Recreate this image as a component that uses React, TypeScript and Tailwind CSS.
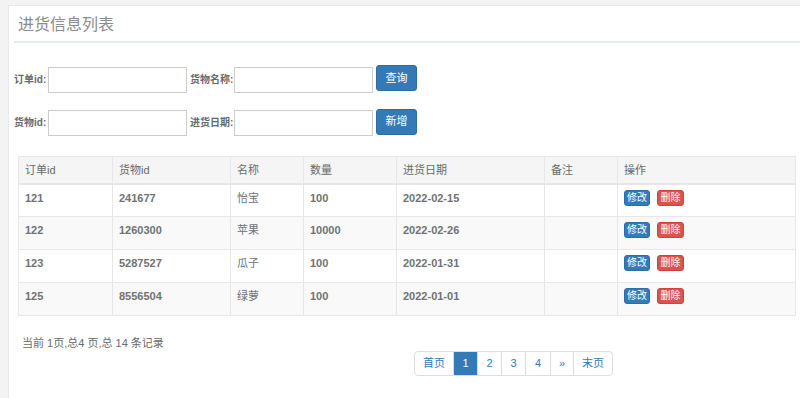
import React from "react";

const rows = [
  ["121", "241677", "怡宝", "100", "2022-02-15"],
  ["122", "1260300", "苹果", "10000", "2022-02-26"],
  ["123", "5287527", "瓜子", "100", "2022-01-31"],
  ["125", "8556504", "绿萝", "100", "2022-01-01"],
];

const widths = [94, 118, 73, 93, 148, 73, 178];
const heads = ["订单id", "货物id", "名称", "数量", "进货日期", "备注", "操作"];

function Label({ w, children }: { w: number; children: React.ReactNode }) {
  return (
    <span style={{ width: w }} className="shrink-0 whitespace-nowrap">
      {children}
    </span>
  );
}

export default function App() {
  return (
    <div
      className="w-[800px] h-[398px] overflow-hidden bg-[#f3f3f4] pl-[8px] pt-[5px] text-[#676a6c]"
      style={{ fontFamily: '"Liberation Sans", "Noto Sans CJK SC", sans-serif' }}
    >
      <div className="h-[400px] w-[800px] bg-white border-l border-t border-[#e7eaec]">
        <div className="ml-[5px] mr-[7px] h-[37px] border-b-2 border-[#e7eaec] pl-[4px] pt-[9px] text-[16px] leading-[20px] text-[#8a8c8e]">
          进货信息列表
        </div>
        <div className="ml-[5px] pt-[23px] text-[10px] font-bold">
          <div className="flex items-center h-[27px]">
            <Label w={34}>订单id:</Label>
            <input className="w-[139px] h-[26px] shrink-0 border border-[#ccc] bg-white" />
            <span className="w-[3px] shrink-0" />
            <Label w={44}>货物名称:</Label>
            <input className="w-[139px] h-[26px] shrink-0 border border-[#ccc] bg-white" />
            <button className="ml-[3px] -mt-[3px] w-[41px] h-[26px] shrink-0 rounded-[3px] bg-[#337ab7] border border-[#2e6da4] text-white font-normal text-[11px]">
              查询
            </button>
          </div>
          <div className="flex items-center h-[27px] mt-[16px]">
            <Label w={34}>货物id:</Label>
            <input className="w-[139px] h-[26px] shrink-0 border border-[#ccc] bg-white" />
            <span className="w-[3px] shrink-0" />
            <Label w={44}>进货日期:</Label>
            <input className="w-[139px] h-[26px] shrink-0 border border-[#ccc] bg-white" />
            <button className="ml-[3px] -mt-[2px] w-[41px] h-[26px] shrink-0 rounded-[3px] bg-[#337ab7] border border-[#2e6da4] text-white font-normal text-[11px]">
              新增
            </button>
          </div>
        </div>
        <table className="ml-[9px] mt-[20px] border-collapse text-[11px] table-fixed" style={{ width: 777 }}>
          <colgroup>
            {widths.map((w, i) => (
              <col key={i} style={{ width: w }} />
            ))}
          </colgroup>
          <thead>
            <tr className="h-[27px] bg-[#f5f5f6]">
              {heads.map((h) => (
                <th key={h} className="border border-[#e7e7e7] border-b-2 text-left font-normal pl-[6px] text-[11px]">
                  {h}
                </th>
              ))}
            </tr>
          </thead>
          <tbody>
            {rows.map((r, i) => (
              <tr key={i} className={`h-[33px] ${i % 2 === 1 ? "bg-[#f9f9f9]" : "bg-white"}`}>
                {r.map((c, j) => (
                  <td
                    key={j}
                    className={`border border-[#e7e7e7] align-top pl-[6px] pt-[5px] text-[#6f7275] ${
                      j === 2 ? "font-normal" : "font-bold"
                    }`}
                  >
                    {c}
                  </td>
                ))}
                <td className="border border-[#e7e7e7]" />
                <td className="border border-[#e7e7e7] align-top pl-[6px] pt-[5px]">
                  <div className="flex gap-[7px]">
                    <span className="w-[26px] h-[16px] rounded-[3px] bg-[#337ab7] border border-[#2e6da4] text-white text-[10px] leading-[14px] text-center">
                      修改
                    </span>
                    <span className="w-[27px] h-[16px] rounded-[3px] bg-[#d9534f] border border-[#d43f3a] text-white text-[10px] leading-[14px] text-center">
                      删除
                    </span>
                  </div>
                </td>
              </tr>
            ))}
          </tbody>
        </table>
        <div className="ml-[13px] mt-[20px] text-[11px] leading-[14px]">当前 1页,总4 页,总 14 条记录</div>
        <div className="ml-[405px] mt-[1px] flex h-[25px] text-[11px] text-[#337ab7]">
          {[
            ["首页", 40],
            ["1", 25],
            ["2", 25],
            ["3", 25],
            ["4", 26],
            ["»", 24],
            ["末页", 40],
          ].map(([t, w], i) => (
            <div
              key={i}
              style={{ width: w as number }}
              className={`flex items-center justify-center border border-[#ddd] -ml-px first:ml-0 first:rounded-l-[4px] last:rounded-r-[4px] ${
                t === "1" ? "bg-[#337ab7] border-[#337ab7] text-white" : "bg-white"
              }`}
            >
              {t}
            </div>
          ))}
        </div>
      </div>
    </div>
  );
}
